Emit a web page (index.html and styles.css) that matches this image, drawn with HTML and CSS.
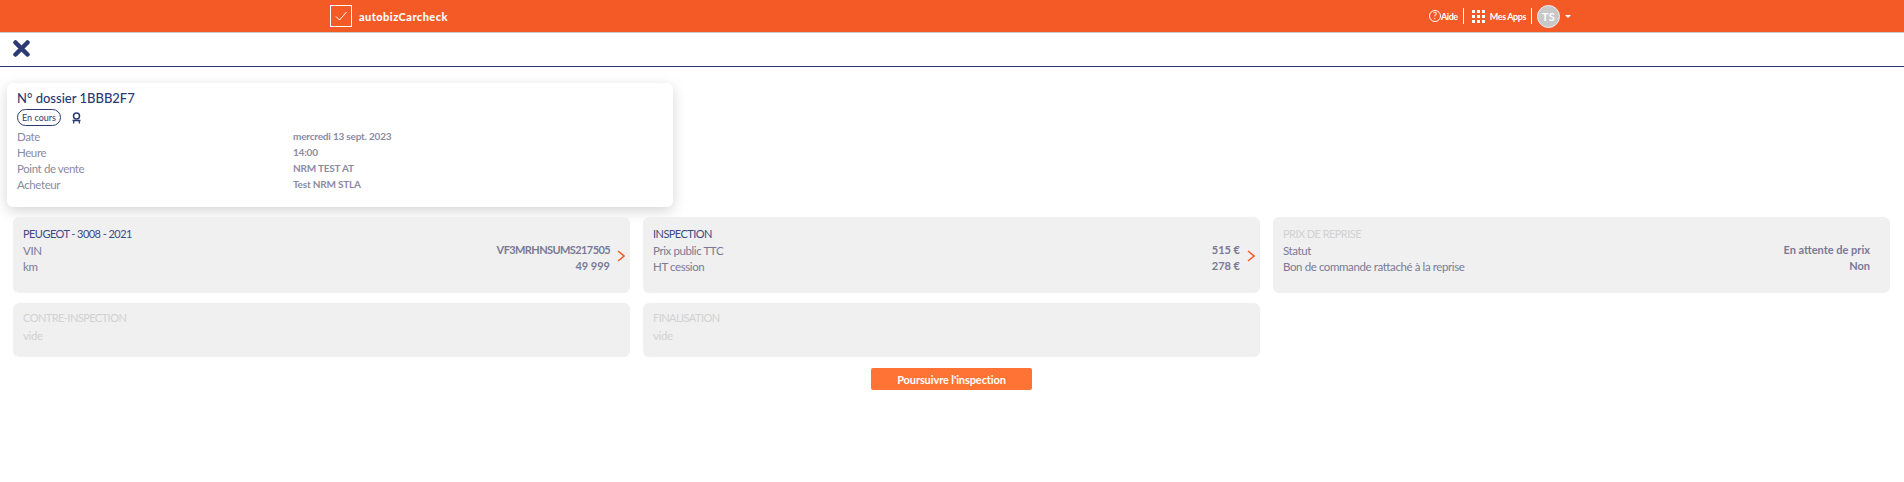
FILE: index.html
```html
<!DOCTYPE html>
<html lang="fr">
<head>
    <meta charset="UTF-8">
    <meta name="viewport" content="width=device-width, initial-scale=1.0">
    <title>autobizCarcheck</title>
    <link rel="stylesheet" href="styles.css">
</head>
<body>
    <header class="topbar">
        <div class="brand">
            <span class="brand-box">
                <svg width="14" height="12" viewBox="0 0 14 12"><path d="M2 6.500 L5.500 10 L12.500 2" fill="none" stroke="#fff" stroke-width="1"/></svg>
            </span>
            <span class="brand-name">autobizCarcheck</span>
        </div>
        <nav class="topnav">
            <span class="help-icon">?</span>
            <span class="nav-text">Aide</span>
            <span class="nav-sep"></span>
            <span class="apps-grid">
                <i></i><i></i><i></i><i></i><i></i><i></i><i></i><i></i><i></i>
            </span>
            <span class="nav-text apps-text">Mes Apps</span>
            <span class="nav-sep"></span>
            <span class="avatar">TS</span>
            <span class="caret"></span>
        </nav>
    </header>

    <div class="toolbar">
        <svg class="close-icon" width="17" height="17" viewBox="0 0 17 17"><path d="M2.500 2.500 L14.500 14.500 M14.500 2.500 L2.500 14.500" stroke="#2b3a72" stroke-width="4.500" stroke-linecap="round"/></svg>
    </div>

    <section class="summary">
        <h1>N° dossier 1BBB2F7</h1>
        <div class="badges">
            <span class="pill">En cours</span>
            <svg class="ribbon" width="9" height="12" viewBox="0 0 9 12"><circle cx="4.500" cy="4" r="3" fill="none" stroke="#2b3a72" stroke-width="1.500"/><path d="M0.500 8.500 H8.500 M2 8.500 L1.500 11.500 M7 8.500 L7.500 11.500" stroke="#2b3a72" stroke-width="1.300" fill="none"/></svg>
        </div>
        <dl class="summary-rows">
            <dt>Date</dt><dd>mercredi 13 sept. 2023</dd>
            <dt>Heure</dt><dd>14:00</dd>
            <dt>Point de vente</dt><dd>NRM TEST AT</dd>
            <dt>Acheteur</dt><dd>Test NRM STLA</dd>
        </dl>
    </section>

    <main class="tiles">
        <article class="tile tall">
            <h2>PEUGEOT - 3008 - 2021</h2>
            <div class="row"><span>VIN</span><b class="vin">VF3MRHNSUMS217505</b></div>
            <div class="row"><span>km</span><b>49 999</b></div>
            <svg class="chevron" width="8" height="12" viewBox="0 0 8 12"><path d="M1 1 L7 6 L1 11" fill="none" stroke="#f55a25" stroke-width="1.500"/></svg>
        </article>
        <article class="tile tall">
            <h2>INSPECTION</h2>
            <div class="row"><span>Prix public TTC</span><b>515 €</b></div>
            <div class="row"><span>HT cession</span><b>278 €</b></div>
            <svg class="chevron" width="8" height="12" viewBox="0 0 8 12"><path d="M1 1 L7 6 L1 11" fill="none" stroke="#f55a25" stroke-width="1.500"/></svg>
        </article>
        <article class="tile tall">
            <h2 class="muted">PRIX DE REPRISE</h2>
            <div class="row"><span>Statut</span><b>En attente de prix</b></div>
            <div class="row"><span>Bon de commande rattaché à la reprise</span><b>Non</b></div>
        </article>
        <article class="tile">
            <h2 class="muted">CONTRE-INSPECTION</h2>
            <div class="empty">vide</div>
        </article>
        <article class="tile">
            <h2 class="muted">FINALISATION</h2>
            <div class="empty">vide</div>
        </article>
    </main>

    <div class="actions">
        <button class="primary">Poursuivre l'inspection</button>
    </div>
</body>
</html>
```
FILE: styles.css
```css
body {
    margin: 0;
    background-color: white;
    color: #2b3a72;
    font-family: "Lato", sans-serif;
    font-size: 11.5px;
    letter-spacing: -0.4px;
}
.topbar {
    height: 33px;
    box-sizing: border-box;
    background-color: #f35a26;
    border-bottom: 1px solid #ccc;
    display: flex;
    align-items: center;
    justify-content: space-between;
    padding: 0 333px 0 330px;
    color: white;
}
.brand {
    display: flex;
    align-items: center;
    gap: 7px;
}
.brand-box {
    width: 22px;
    height: 22px;
    box-sizing: border-box;
    border: 1px solid white;
    display: flex;
    align-items: center;
    justify-content: center;
}
.brand-name {
    font-weight: 900;
    font-size: 11px;
    letter-spacing: 0.45px;
}
.topnav {
    display: flex;
    align-items: center;
}
.help-icon {
    width: 12px;
    height: 12px;
    box-sizing: border-box;
    border: 1px solid white;
    border-radius: 50%;
    font-size: 9px;
    line-height: 10px;
    text-align: center;
    letter-spacing: 0;
}
.nav-text {
    font-size: 9px;
    font-weight: 700;
    letter-spacing: -0.4px;
}
.apps-text {
    margin-left: 5px;
}
.nav-sep {
    width: 1px;
    height: 16px;
    background-color: white;
    margin: 0 5px;
}
.apps-grid {
    display: grid;
    grid-template-columns: repeat(3, 3px);
    grid-template-rows: repeat(3, 3px);
    gap: 2px;
    margin-left: 3px;
}
.apps-grid i {
    background-color: white;
}
.avatar {
    width: 23px;
    height: 23px;
    border-radius: 50%;
    background-color: #c8c8c8;
    border: 1px solid #eee;
    box-sizing: border-box;
    text-align: center;
    line-height: 21px;
    font-size: 11px;
    font-weight: 700;
    letter-spacing: 0.5px;
}
.caret {
    margin-left: 5px;
    border-left: 3px solid transparent;
    border-right: 3px solid transparent;
    border-top: 3px solid white;
}
.toolbar {
    height: 34px;
    box-sizing: border-box;
    border-bottom: 1px solid #2b3a72;
    padding: 7px 0 0 13px;
}
.close-icon {
    display: block;
}
.summary {
    width: 666px;
    height: 124px;
    box-sizing: border-box;
    margin: 16px 0 10px 7px;
    padding: 7px 10px;
    background-color: white;
    border-radius: 6px;
    box-shadow: 0 4px 14px rgba(0, 0, 0, 0.17);
}
.summary h1 {
    margin: 0;
    font-size: 13px;
    font-weight: 500;
    letter-spacing: 0;
    line-height: 17px;
}
.badges {
    display: flex;
    align-items: center;
    gap: 11px;
    margin-top: 2px;
}
.pill {
    box-sizing: border-box;
    border: 1px solid #2b3a72;
    border-radius: 9px;
    height: 17px;
    width: 44px;
    text-align: center;
    font-size: 9px;
    letter-spacing: 0;
    line-height: 15px;
}
.summary-rows {
    display: grid;
    grid-template-columns: 276px 1fr;
    grid-auto-rows: 16px;
    margin: 3px 0 0;
    line-height: 16px;
}
.summary-rows dt {
    color: #8b8ba3;
}
.summary-rows dd {
    margin: 0;
    color: #8b8ba3;
    font-size: 10px;
    font-weight: 700;
    letter-spacing: -0.2px;
    line-height: 14px;
}
.tiles {
    display: grid;
    grid-template-columns: repeat(3, 617px);
    gap: 10px 13px;
    padding-left: 13px;
}
.tile {
    position: relative;
    background-color: #f0f0f0;
    border-radius: 6px;
    box-sizing: border-box;
    height: 54px;
    padding: 7px 20px 0 10px;
    color: #7a7a96;
    line-height: 16px;
}
.tile.tall {
    height: 76px;
    padding-top: 9px;
}
.tile h2 {
    margin: 0 0 2px;
    font-size: 11px;
    font-weight: 400;
    letter-spacing: -0.55px;
    color: #3d4a85;
}
.tile.tall h2 {
    margin-bottom: 1px;
}
.tile h2.muted {
    color: #d2d2d2;
}
.row {
    display: flex;
    justify-content: space-between;
    align-items: flex-start;
}
.row b {
    font-size: 11px;
    font-weight: 700;
    letter-spacing: 0;
    line-height: 14px;
}
.row b.vin {
    letter-spacing: -0.6px;
}
.empty {
    color: #d2d2d2;
}
.chevron {
    position: absolute;
    right: 5px;
    top: 33px;
}
.actions {
    display: flex;
    justify-content: center;
    margin-top: 11px;
}
.primary {
    width: 161px;
    height: 22px;
    margin-right: 1px;
    border: none;
    border-radius: 2px;
    background-color: #ff7335;
    color: white;
    font-family: inherit;
    font-size: 11px;
    font-weight: 700;
    letter-spacing: -0.1px;
}
```
